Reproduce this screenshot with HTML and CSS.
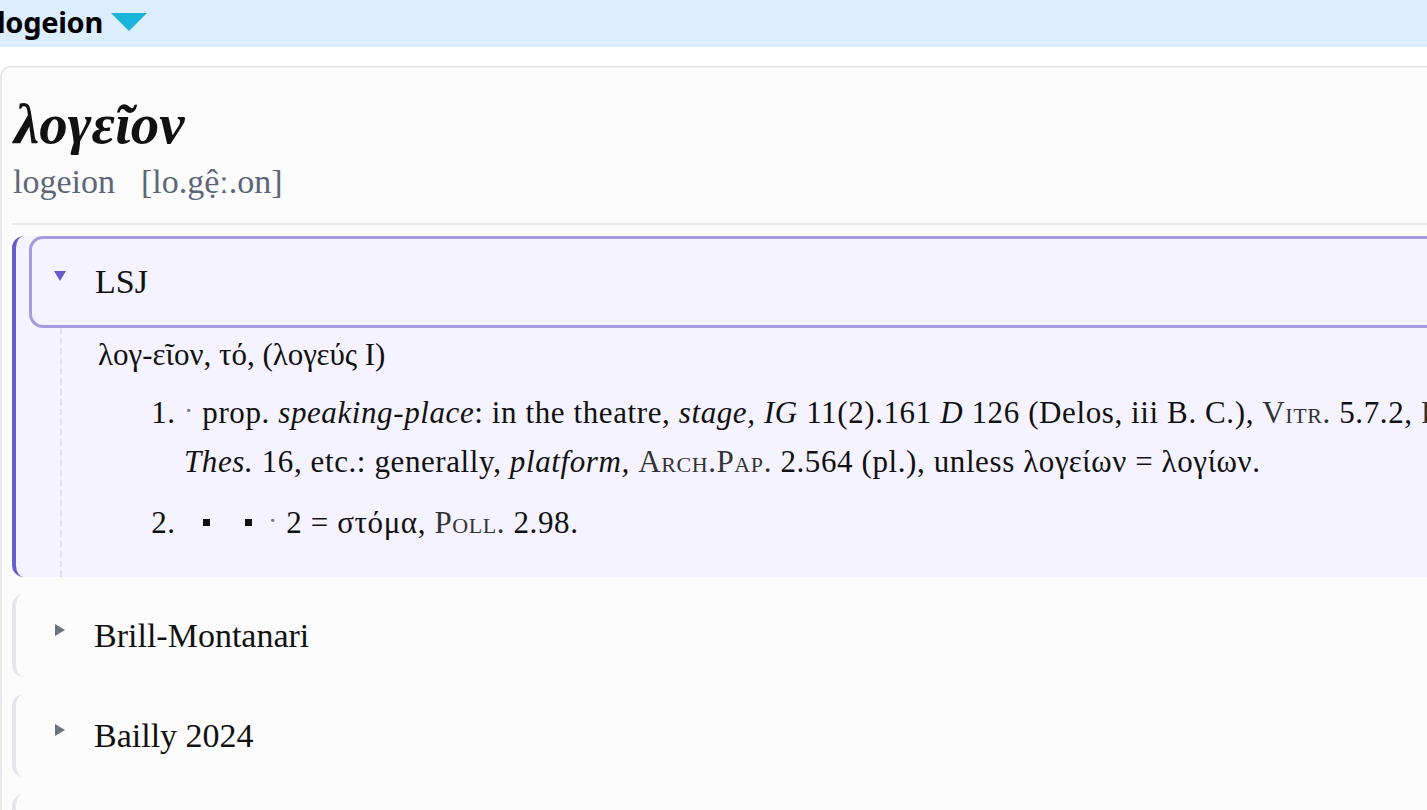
FILE: index.html
```html
<!DOCTYPE html>
<html lang="en">
<head>
    <meta charset="UTF-8">
    <meta name="viewport" content="width=device-width, initial-scale=1.0">
    <title>logeion</title>
    <link rel="stylesheet" href="styles.css">
</head>
<body>
    <!-- top bar -->
    <header class="topbar">
        <span class="brand">logeion</span>
        <svg class="caret" width="36" height="18" viewBox="0 0 36 18">
            <polygon points="0,0 36,0 18,18" fill="#1ab4db"/>
        </svg>
    </header>

    <main class="entry">
        <!-- headword -->
        <section class="headword">
            <h1 class="lemma">λογεῖον</h1>
            <div class="translit">
                <span>logeion</span>
                <span class="pron">[lo.gệː.on]</span>
            </div>
        </section>

        <div class="dicts">
            <div class="dict dict-open">
                <div class="dict-head">
                    <span class="arrow-down"></span>
                    <span class="dict-name">LSJ</span>
                </div>
                <div class="dict-body">
                    <div class="lemma-line">λογ-εῖον, τό, (λογεύς I)</div>
                    <ol class="senses">
                        <li><span class="dot">·</span> prop. <i>speaking-place</i>: in the theatre, <i>stage, IG</i> 11(2).161 <i>D</i> 126 (Delos, iii B. C.), <span class="sc">Vitr.</span> 5.7.2, <span class="sc">Plu.</span> <i>Thes.</i> 16, etc.: generally, <i>platform,</i> <span class="sc">Arch.Pap.</span> 2.564 (pl.), unless λογείων = λογίων.</li>
                        <li><span class="sq"></span><span class="sq"></span><span class="dot">·</span> 2 = στόμα, <span class="sc">Poll.</span> 2.98.</li>
                    </ol>
                </div>
            </div>

            <div class="dict">
                <div class="dict-head">
                    <span class="arrow-right"></span>
                    <span class="dict-name">Brill-Montanari</span>
                </div>
            </div>

            <div class="dict">
                <div class="dict-head">
                    <span class="arrow-right"></span>
                    <span class="dict-name">Bailly 2024</span>
                </div>
            </div>

            <div class="dict">
                <div class="dict-head">
                    <span class="arrow-right"></span>
                    <span class="dict-name">Cunliffe</span>
                </div>
            </div>
        </div>
    </main>
</body>
</html>
```

FILE: styles.css
```css
html, body {
    overflow: hidden;
}
body {
    margin: 0;
    font-family: "Liberation Serif", "DejaVu Serif", serif;
    background: #fff;
    color: #111;
}
.topbar {
    height: 47px;
    background: #dcedfd;
    display: flex;
    align-items: center;
    gap: 8px;
    margin-left: -3px;
}
.brand {
    font-family: "Noto Sans", "Liberation Sans", sans-serif;
    font-weight: 700;
    font-size: 29px;
    color: #000;
    letter-spacing: -0.3px;
    padding-bottom: 4px;
}
.caret {
    display: block;
    margin-bottom: 3px;
}
.entry {
    width: 1700px;
    margin-top: 19px;
    border-top: 2px solid #e8e8ee;
    border-left: 2px solid #e8e8ee;
    border-top-left-radius: 10px;
    background: #fcfcfd;
    padding-left: 10px;
}
.headword {
    padding-top: 26px;
    padding-bottom: 19px;
    border-bottom: 2px solid #e6e7ec;
}
.lemma {
    margin: 0;
    font-size: 57px;
    font-style: italic;
    font-weight: 700;
    line-height: 60px;
    padding-left: 2px;
}
.translit {
    font-size: 34px;
    color: #5d6778;
    line-height: 44px;
    margin-top: 6px;
    display: flex;
    gap: 26px;
    padding-left: 1px;
}
.dicts {
    padding-top: 11px;
    display: flex;
    flex-direction: column;
    gap: 17px;
}
.dict {
    border-left: 4px solid #e5e5ee;
    border-radius: 12px 0 0 12px;
    background: #fcfcfd;
}
.dict-open {
    border-left-color: #6a5bcf;
    background: #f5f3ff;
}
.dict-head {
    height: 83px;
    display: flex;
    align-items: center;
    padding-left: 39px;
}
.dict-open .dict-head {
    height: 86px;
    margin-left: 13px;
    padding-left: 22px;
    border: 3px solid #a59be0;
    border-radius: 14px;
}
.dict-name {
    font-size: 34px;
    margin-left: 29px;
}
.arrow-down {
    width: 0;
    height: 0;
    border-left: 6px solid transparent;
    border-right: 6px solid transparent;
    border-top: 10px solid #6a5bcf;
    margin-top: -12px;
}
.arrow-right {
    width: 0;
    height: 0;
    border-top: 6px solid transparent;
    border-bottom: 6px solid transparent;
    border-left: 10px solid #6b7280;
    margin-top: -12px;
}
.dict-body {
    margin-left: 44px;
    border-left: 2px dashed #e1dfee;
    padding: 2px 0 30px 36px;
    font-size: 31px;
    line-height: 49px;
}
.senses {
    margin: 9px 0 0 0;
    padding-left: 86px;
    width: 1330px;
    letter-spacing: 0.6px;
}
.senses li {
    margin-bottom: 12px;
}
.senses li:last-child {
    margin-bottom: 0;
}
.dot {
    color: #777;
    font-size: 28px;
    line-height: 1;
    vertical-align: 3px;
}
.sq {
    display: inline-block;
    width: 7px;
    height: 7px;
    background: #111;
    margin-left: 19px;
    margin-right: 16px;
    vertical-align: 7px;
}
.sc {
    font-variant: small-caps;
    color: #333;
}
```
